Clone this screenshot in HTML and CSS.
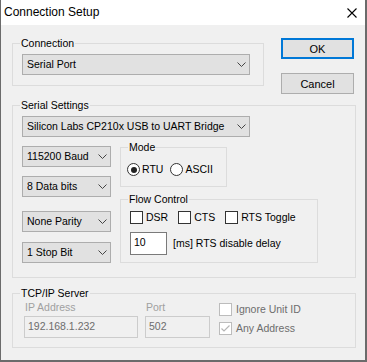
FILE: index.html
```html
<!DOCTYPE html>
<html lang="en">
<head>
    <meta charset="UTF-8">
    <title>Connection Setup</title>
    <link rel="stylesheet" href="styles.css">
</head>
<body>
    <div class="window">
        <div class="titlebar">
            <span class="title">Connection Setup</span>
            <svg class="close" width="10" height="10" viewBox="0 0 10 10">
                <path d="M0.5 0.5L9.5 9.5M9.5 0.5L0.5 9.5" stroke="#000" stroke-width="1.1" fill="none"/>
            </svg>
        </div>

        <div class="content">
            <div class="top-row">
                <div class="group group-conn">
                    <span class="group-label">Connection</span>
                    <div class="combo">Serial Port
                        <svg class="arrow" width="9" height="5" viewBox="0 0 9 5"><path d="M0.5 0.5L4.5 4.5L8.5 0.5" stroke="#444" fill="none"/></svg>
                    </div>
                </div>
                <div class="buttons">
                    <button class="btn btn-default">OK</button>
                    <button class="btn">Cancel</button>
                </div>
            </div>

            <div class="group group-serial">
                <span class="group-label">Serial Settings</span>
                <div class="combo combo-port">Silicon Labs CP210x USB to UART Bridge
                    <svg class="arrow" width="9" height="5" viewBox="0 0 9 5"><path d="M0.5 0.5L4.5 4.5L8.5 0.5" stroke="#444" fill="none"/></svg>
                </div>
                <div class="serial-row">
                    <div class="serial-combos">
                        <div class="combo">115200 Baud
                            <svg class="arrow" width="9" height="5" viewBox="0 0 9 5"><path d="M0.5 0.5L4.5 4.5L8.5 0.5" stroke="#444" fill="none"/></svg>
                        </div>
                        <div class="combo combo-data">8 Data bits
                            <svg class="arrow" width="9" height="5" viewBox="0 0 9 5"><path d="M0.5 0.5L4.5 4.5L8.5 0.5" stroke="#444" fill="none"/></svg>
                        </div>
                        <div class="combo combo-parity">None Parity
                            <svg class="arrow" width="9" height="5" viewBox="0 0 9 5"><path d="M0.5 0.5L4.5 4.5L8.5 0.5" stroke="#444" fill="none"/></svg>
                        </div>
                        <div class="combo combo-stop">1 Stop Bit
                            <svg class="arrow" width="9" height="5" viewBox="0 0 9 5"><path d="M0.5 0.5L4.5 4.5L8.5 0.5" stroke="#444" fill="none"/></svg>
                        </div>
                    </div>
                    <div class="serial-side">
                        <div class="group group-mode">
                            <span class="group-label">Mode</span>
                            <div class="radios">
                                <span class="radio-item"><span class="radio checked"></span>RTU</span>
                                <span class="radio-item"><span class="radio"></span>ASCII</span>
                            </div>
                        </div>
                        <div class="group group-flow">
                            <span class="group-label">Flow Control</span>
                            <div class="checks">
                                <span class="check-item"><span class="checkbox"></span>DSR</span>
                                <span class="check-item"><span class="checkbox"></span>CTS</span>
                                <span class="check-item"><span class="checkbox"></span>RTS Toggle</span>
                            </div>
                            <div class="delay-row">
                                <div class="textbox textbox-delay">10</div>
                                <span class="delay-label">[ms] RTS disable delay</span>
                            </div>
                        </div>
                    </div>
                </div>
            </div>

            <div class="group group-tcp">
                <span class="group-label">TCP/IP Server</span>
                <div class="tcp-row">
                    <div class="field field-ip">
                        <span class="field-label">IP Address</span>
                        <div class="textbox disabled">192.168.1.232</div>
                    </div>
                    <div class="field field-port">
                        <span class="field-label">Port</span>
                        <div class="textbox disabled">502</div>
                    </div>
                    <div class="tcp-checks">
                        <span class="check-item disabled"><span class="checkbox"></span>Ignore Unit ID</span>
                        <span class="check-item disabled"><span class="checkbox">
                            <svg width="11" height="11" viewBox="0 0 11 11"><path d="M1.5 5.5L4 8L9.5 2.5" stroke="#b5b5b5" stroke-width="1.2" fill="none"/></svg>
                        </span>Any Address</span>
                    </div>
                </div>
            </div>
        </div>
    </div>
</body>
</html>
```

FILE: styles.css
```css
body {
    margin: 0;
    font-family: "Liberation Sans", Arial, sans-serif;
    font-size: 10.5px;
    line-height: 13px;
    color: #000;
}
.window {
    width: 367px;
    height: 362px;
    box-sizing: border-box;
    border: solid #6b6b6b;
    border-width: 0 2px 2px 1px;
    background-color: #f0f0f0;
    display: flex;
    flex-direction: column;
}
.titlebar {
    height: 25px;
    background-color: #fff;
    display: flex;
    align-items: center;
    justify-content: space-between;
    padding: 0 8px 0 3px;
}
.title {
    font-size: 12px;
}
.close {
    display: block;
}
.content {
    padding: 13px 9px 0 11px;
}
.top-row {
    display: flex;
    align-items: flex-start;
}
.group {
    position: relative;
    border: 1px solid #dcdcdc;
}
.group-label {
    position: absolute;
    top: -7px;
    left: 7px;
    padding: 0 1px;
    background-color: #f0f0f0;
    white-space: nowrap;
}
.group-conn {
    width: 252px;
    box-sizing: border-box;
    margin-top: 5px;
    padding: 10px 13px 10px 9px;
}
.buttons {
    display: flex;
    flex-direction: column;
    gap: 14px;
    margin-left: 17px;
}
.btn {
    width: 73px;
    height: 21px;
    box-sizing: border-box;
    border: 1px solid #adadad;
    background-color: #e1e1e1;
    font-family: inherit;
    font-size: 11px;
    padding: 0;
    color: #000;
}
.btn-default {
    border: 2px solid #0078d7;
}
.combo {
    height: 21px;
    box-sizing: border-box;
    border: 1px solid #adadad;
    background-color: #e1e1e1;
    display: flex;
    align-items: center;
    justify-content: space-between;
    padding: 0 3px 0 4px;
    white-space: nowrap;
}
.arrow {
    display: block;
    flex-shrink: 0;
}
.group-serial {
    margin-top: 11px;
    padding: 10px 9px 14px 9px;
}
.combo-port {
    width: 228px;
}
.serial-row {
    display: flex;
    gap: 9px;
    margin-top: 9px;
}
.serial-combos {
    width: 89px;
    display: flex;
    flex-direction: column;
}
.combo-data {
    margin-top: 9px;
}
.combo-parity {
    margin-top: 14px;
}
.combo-stop {
    margin-top: 10px;
}
.serial-side {
    display: flex;
    flex-direction: column;
    align-items: flex-start;
}
.group-mode {
    width: 107px;
    box-sizing: border-box;
    margin-top: 1px;
    padding: 15px 6px 10px 6px;
}
.radios {
    display: flex;
    gap: 7px;
}
.radio-item,
.check-item {
    display: flex;
    align-items: center;
    gap: 2px;
    white-space: nowrap;
}
.radio {
    width: 13px;
    height: 13px;
    box-sizing: border-box;
    border: 1px solid #333;
    border-radius: 50%;
    background-color: #fff;
    display: flex;
    align-items: center;
    justify-content: center;
}
.radio.checked::after {
    content: "";
    width: 6px;
    height: 6px;
    border-radius: 50%;
    background-color: #222;
}
.group-flow {
    width: 198px;
    box-sizing: border-box;
    margin-top: 12px;
    padding: 11px 9px 7px 9px;
}
.checks {
    display: flex;
    gap: 10px;
}
.check-item {
    gap: 3px;
}
.checkbox {
    width: 13px;
    height: 13px;
    box-sizing: border-box;
    border: 1px solid #333;
    background-color: #fff;
    display: flex;
    align-items: center;
    justify-content: center;
}
.delay-row {
    display: flex;
    align-items: center;
    margin-top: 8px;
}
.textbox {
    height: 22px;
    box-sizing: border-box;
    border: 1px solid #7a7a7a;
    background-color: #fff;
    padding: 3px 0 0 3px;
    white-space: nowrap;
}
.textbox-delay {
    width: 37px;
    height: 23px;
}
.delay-label {
    margin-left: 6px;
}
.group-tcp {
    margin-top: 15px;
    padding: 7px 9px 9px 11px;
}
.tcp-row {
    display: flex;
    align-items: flex-start;
}
.field {
    display: flex;
    flex-direction: column;
    gap: 2px;
}
.field-ip {
    width: 114px;
}
.field-port {
    width: 65px;
    margin-left: 7px;
}
.field-label {
    padding-left: 1px;
    color: #a0a0a0;
}
.textbox.disabled {
    border-color: #cccccc;
    background-color: #f0f0f0;
    color: #6d6d6d;
}
.tcp-checks {
    display: flex;
    flex-direction: column;
    gap: 6px;
    padding-top: 2px;
    margin-left: 9px;
}
.check-item.disabled {
    color: #6d6d6d;
    gap: 4px;
}
.check-item.disabled .checkbox {
    border-color: #bcbcbc;
}
```
